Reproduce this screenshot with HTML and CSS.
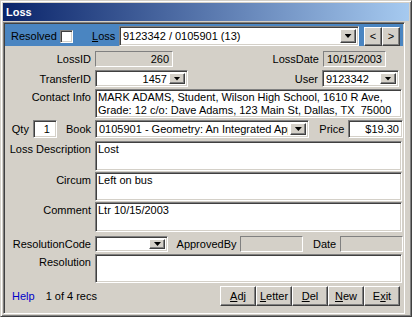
FILE: index.html
```html
<!DOCTYPE html>
<html lang="en">
<head>
    <meta charset="UTF-8">
    <meta name="viewport" content="width=device-width, initial-scale=1.0">
    <title>Loss</title>
    <link rel="stylesheet" href="styles.css">
</head>
<body>
    <div class="window">
        <div class="titlebar">Loss</div>
        <div class="client">
            <div class="navbar">
                <span class="resolved">Resolved</span>
                <span class="checkbox"></span>
                <span class="loss-label"><u>L</u>oss</span>
                <div class="field combo combo-loss"><span class="combo-text">9123342 / 0105901 (13)</span><span class="drop"></span></div>
                <button class="btn nav-btn nav-prev">&lt;</button>
                <button class="btn nav-btn">&gt;</button>
            </div>

            <div class="row row-id">
                <span class="lbl">LossID</span>
                <div class="field readonly num w-lossid">260</div>
                <span class="lbl lbl-lossdate">LossDate</span>
                <div class="field readonly num w-lossdate">10/15/2003</div>
            </div>

            <div class="row row-transfer">
                <span class="lbl">TransferID</span>
                <div class="field combo w-transfer"><span class="combo-text num">1457</span><span class="drop"></span></div>
                <span class="lbl lbl-user">User</span>
                <div class="field combo w-user"><span class="combo-text">9123342</span><span class="drop"></span></div>
            </div>

            <div class="row row-contact">
                <span class="lbl">Contact Info</span>
                <div class="field memo">MARK ADAMS, Student, Wilson High School, 1610 R Ave,<br>Grade: 12 c/o: Dave Adams, 123 Main St, Dallas, TX&nbsp; 75000</div>
            </div>

            <div class="row row-book">
                <span class="lbl lbl-qty">
                    <span>Qty</span>
                    <span class="field num w-qty">1</span>
                    <span>Book</span>
                </span>
                <div class="field combo w-book"><span class="combo-text">0105901 - Geometry: An Integrated Approach</span><span class="drop"></span></div>
                <span class="lbl lbl-price">Price</span>
                <div class="field num w-price">$19.30</div>
            </div>

            <div class="row row-desc">
                <span class="lbl">Loss Description</span>
                <div class="field memo">Lost</div>
            </div>

            <div class="row row-circum">
                <span class="lbl">Circum</span>
                <div class="field memo">Left on bus</div>
            </div>

            <div class="row row-comment">
                <span class="lbl">Comment</span>
                <div class="field memo">Ltr 10/15/2003</div>
            </div>

            <div class="row row-rescode">
                <span class="lbl">ResolutionCode</span>
                <div class="field combo w-rescode"><span class="combo-text"></span><span class="drop"></span></div>
                <span class="lbl lbl-approved">ApprovedBy</span>
                <div class="field readonly w-approved"></div>
                <span class="lbl lbl-date">Date</span>
                <div class="field readonly w-date"></div>
            </div>

            <div class="row row-resolution">
                <span class="lbl">Resolution</span>
                <div class="field memo"></div>
            </div>

            <div class="footer">
                <a class="help" href="#">Help</a>
                <span class="recs">1 of 4 recs</span>
                <div class="actions">
                    <button class="btn action"><u>A</u>dj</button>
                    <button class="btn action"><u>L</u>etter</button>
                    <button class="btn action"><u>D</u>el</button>
                    <button class="btn action"><u>N</u>ew</button>
                    <button class="btn action">E<u>x</u>it</button>
                </div>
            </div>
        </div>
    </div>
</body>
</html>
```

FILE: styles.css
```css
* {
    box-sizing: border-box;
}

body {
    margin: 0;
    background-color: #d4d0c8;
    font-family: 'Liberation Sans', Arial, sans-serif;
    font-size: 11px;
    color: #000;
}

/* window frame */
.window {
    width: 412px;
    height: 317px;
    background: #d4d0c8;
    border: 1px solid;
    border-color: #d4d0c8 #404040 #404040 #d4d0c8;
    box-shadow: inset 1px 1px #fff, inset -1px -1px #808080;
    padding: 2px;
    display: flex;
    flex-direction: column;
}

.titlebar {
    height: 18px;
    line-height: 18px;
    padding-left: 3px;
    background: linear-gradient(to right, #0a246a, #a6caf0);
    color: #fff;
    font-weight: bold;
}

.client {
    flex: 1;
    margin-top: 1px;
    margin-right: 4px;
    border: 1px solid;
    border-color: #808080 #fff #fff #808080;
    padding: 1px;
    box-shadow: inset 1px 1px #404040, inset -1px -1px #d4d0c8;
    display: flex;
    flex-direction: column;
}

/* blue record selector bar */
.navbar {
    height: 22px;
    background: #4a85c1;
    display: flex;
    align-items: center;
    padding: 2px 0 0 6px;
}

.resolved {
    width: 49px;
}

.checkbox {
    width: 13px;
    height: 13px;
    background: #fff;
    border: 1px solid;
    border-color: #808080 #fff #fff #808080;
    box-shadow: inset 1px 1px #404040, inset -1px -1px #d4d0c8;
}

.loss-label {
    margin-left: 19px;
    width: 27px;
}

.combo-loss {
    width: 240px;
    height: 18px;
}

.nav-btn {
    width: 18px;
    height: 19px;
    padding: 0;
}

.nav-prev {
    margin-left: 5px;
}

/* form rows */
.row {
    display: flex;
    align-items: center;
    gap: 4px;
}

.lbl {
    width: 86px;
    flex: none;
    text-align: right;
    white-space: nowrap;
}

.row-id { margin-top: 5px; height: 16px; }
.row-transfer { margin-top: 3px; height: 17px; }
.row-contact { margin-top: 2px; height: 29px; align-items: stretch; }
.row-book { margin-top: 2px; height: 18px; }
.row-desc { margin-top: 3px; height: 30px; align-items: stretch; }
.row-circum { margin-top: 1px; height: 29px; align-items: stretch; }
.row-comment { margin-top: 1px; height: 30px; align-items: stretch; }
.row-rescode { margin-top: 4px; height: 16px; }
.row-resolution { margin-top: 2px; height: 29px; align-items: stretch; }

.row-contact .lbl,
.row-desc .lbl,
.row-circum .lbl,
.row-comment .lbl,
.row-resolution .lbl {
    padding-top: 2px;
}

/* sunken edit fields */
.field {
    height: 100%;
    background: #fff;
    border: 1px solid;
    border-color: #808080 #fff #fff #808080;
    box-shadow: inset 1px 1px #404040, inset -1px -1px #d4d0c8;
    padding: 0 3px 0 3px;
    display: flex;
    align-items: center;
    white-space: nowrap;
    overflow: hidden;
}

.field.readonly {
    background: #d4d0c8;
    box-shadow: none;
}

.num {
    justify-content: flex-end;
}

.memo {
    flex: 1;
    display: block;
    padding: 1px 2px;
    line-height: 13px;
    margin-right: 1px;
}

.combo {
    padding: 2px 2px 2px 3px;
}

.combo-text {
    flex: 1;
    overflow: hidden;
    display: flex;
}

.drop {
    width: 16px;
    height: 100%;
    flex: none;
    background: #d4d0c8;
    border: 1px solid;
    border-color: #fff #404040 #404040 #fff;
    box-shadow: inset -1px -1px #808080;
    display: flex;
    align-items: center;
    justify-content: center;
    margin-left: 2px;
}

.drop::after {
    content: '';
    width: 7px;
    height: 4px;
    background: #000;
    clip-path: polygon(0 0, 100% 0, 50% 100%);
}

.w-lossid { width: 78px; }
.lbl-lossdate { width: 142px; }
.w-lossdate { width: 63px; }

.w-transfer { width: 93px; }
.w-transfer .combo-text { justify-content: flex-end; }
.lbl-user { width: 126px; }
.w-user { width: 77px; }

.lbl-qty {
    display: flex;
    align-items: center;
    justify-content: flex-end;
    height: 100%;
}

.w-qty {
    width: 24px;
    margin: 0 9px 0 4px;
    padding-right: 6px;
}

.w-book { width: 216px; }
.lbl-price { width: 31px; }
.w-price { width: 55px; }

.w-rescode { width: 75px; }
.lbl-approved { width: 64px; }
.w-approved { width: 64px; }
.lbl-date { width: 29px; }
.w-date { width: 64px; }

/* raised buttons */
.btn {
    font-family: inherit;
    font-size: 11px;
    color: #000;
    background: #d4d0c8;
    border: 1px solid;
    border-color: #fff #404040 #404040 #fff;
    box-shadow: inset -1px -1px #808080;
}

.footer {
    margin-top: 3px;
    height: 20px;
    display: flex;
    align-items: center;
    padding: 0 3px 0 7px;
}

.help {
    color: #0000c8;
    text-decoration: none;
    margin-right: 11px;
}

.actions {
    margin-left: auto;
    display: flex;
    height: 100%;
}

.action {
    width: 36px;
    height: 100%;
    padding: 0;
}
```
